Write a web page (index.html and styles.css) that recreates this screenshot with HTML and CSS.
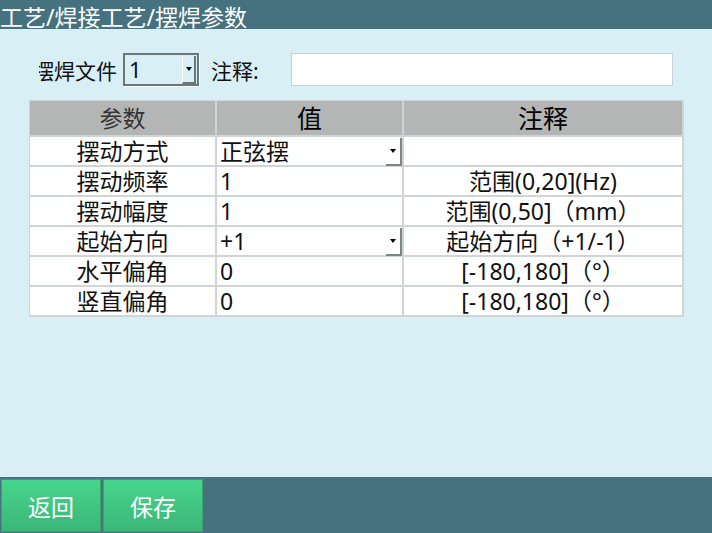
FILE: index.html
```html
<!DOCTYPE html>
<html lang="zh-CN">

<head>
    <meta charset="UTF-8">
    <title>摆焊参数</title>
    <link rel="stylesheet" href="styles.css">
</head>

<body>
    <div class="title-bar">工艺/焊接工艺/摆焊参数</div>

    <div class="content">
        <!-- file selector + note -->
        <div class="file-row">
            <div class="file-label"><span>摆焊文件</span></div>
            <div class="combo">
                <span class="combo-value">1</span>
                <span class="combo-btn"><i class="arrow"></i></span>
            </div>
            <span class="note-label">注释:</span>
            <div class="note-input"></div>
        </div>

        <!-- parameters -->
        <div class="param-table">
            <div class="th th-name">参数</div>
            <div class="th">值</div>
            <div class="th">注释</div>

            <div class="td name">摆动方式</div>
            <div class="td value select"><span>正弦摆</span><span class="cell-btn"><i class="arrow"></i></span></div>
            <div class="td note"></div>

            <div class="td name">摆动频率</div>
            <div class="td value">1</div>
            <div class="td note">范围(0,20](Hz)</div>

            <div class="td name">摆动幅度</div>
            <div class="td value">1</div>
            <div class="td note">范围(0,50]（mm）</div>

            <div class="td name">起始方向</div>
            <div class="td value select"><span>+1</span><span class="cell-btn"><i class="arrow"></i></span></div>
            <div class="td note">起始方向（+1/-1）</div>

            <div class="td name">水平偏角</div>
            <div class="td value">0</div>
            <div class="td note">[-180,180]（°）</div>

            <div class="td name">竖直偏角</div>
            <div class="td value">0</div>
            <div class="td note">[-180,180]（°）</div>
        </div>
    </div>

    <div class="bottom-bar">
        <button class="btn">返回</button>
        <button class="btn">保存</button>
    </div>
</body>

</html>
```

FILE: styles.css
```css
body {
    margin: 0;
    width: 712px;
    height: 533px;
    display: flex;
    flex-direction: column;
    background-color: #d9eff6;
    font-family: "Noto Sans", "Noto Sans CJK SC", sans-serif;
    color: #111;
    overflow: hidden;
}

.title-bar {
    height: 29px;
    box-sizing: border-box;
    padding-top: 6px;
    line-height: 23px;
    background-color: #46717f;
    color: #fff;
    font-size: 23px;
    white-space: nowrap;
}

.content {
    flex: 1;
    padding: 24px 0 0 29px;
}

.file-row {
    display: flex;
    align-items: center;
    height: 33px;
    font-size: 21px;
}

.file-label {
    width: 78px;
    margin-left: 10px;
    display: flex;
    justify-content: flex-end;
    overflow: hidden;
    white-space: nowrap;
}

.combo {
    width: 72px;
    height: 29px;
    margin-left: 6px;
    display: flex;
    border: 2px solid #6b7678;
    box-shadow: 1px 1px 0 #fff;
}

.combo-value {
    flex: 1;
    padding-left: 4px;
    line-height: 29px;
    font-size: 22px;
}

.combo-btn {
    width: 11px;
    margin: 1px 1px 0 0;
    border-left: 1px solid #fff;
    border-right: 2px solid #6b7678;
    border-bottom: 2px solid #6b7678;
    display: flex;
    align-items: center;
    justify-content: center;
}

.arrow {
    width: 0;
    height: 0;
    border-left: 3px solid transparent;
    border-right: 3px solid transparent;
    border-top: 4px solid #000;
}

.note-label {
    margin-left: 12px;
    width: 80px;
}

.note-input {
    width: 380px;
    height: 31px;
    background-color: #fff;
    border: 1px solid #c9d2d4;
}

.param-table {
    margin-top: 14px;
    display: grid;
    grid-template-columns: 185px 185px 278px;
    grid-template-rows: 34px repeat(6, 28px);
    gap: 2px;
    width: fit-content;
    padding: 1px 2px 2px 1px;
    background-color: #cfd4d4;
}

.th {
    background-color: #b3b6b4;
    text-align: center;
    line-height: 34px;
    font-size: 25px;
    color: #000;
}

.th-name {
    font-size: 23px;
    color: #333;
}

.td {
    background-color: #fff;
    line-height: 28px;
    font-size: 23px;
    white-space: nowrap;
}

.name,
.note {
    text-align: center;
}

.value {
    padding-left: 3px;
}

.select {
    display: flex;
    justify-content: space-between;
}

.cell-btn {
    width: 14px;
    height: 26px;
    margin-top: 1px;
    border-right: 2px solid #7d8587;
    border-bottom: 2px solid #7d8587;
    display: flex;
    align-items: center;
    justify-content: center;
}

.bottom-bar {
    height: 56px;
    background-color: #46717f;
    display: flex;
    gap: 2px;
    padding: 2px 0 0 1px;
    box-sizing: border-box;
}

.btn {
    width: 100px;
    height: 53px;
    border: 1px solid #3aa66e;
    background: linear-gradient(#47d68c, #3bb677);
    color: #fff;
    font-family: "Noto Sans CJK SC", sans-serif;
    font-size: 23px;
    padding: 0;
}
```
